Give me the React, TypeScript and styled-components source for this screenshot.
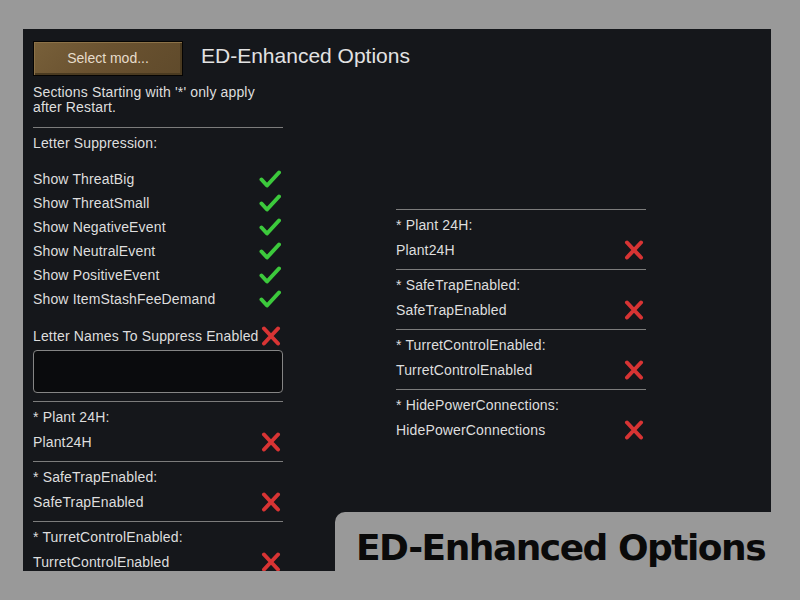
import { FC } from 'react';
import styled, { createGlobalStyle } from 'styled-components';

const GlobalStyle = createGlobalStyle`
    html, body {
        margin: 0;
        padding: 0;
        background: #999999;
    }
    body {
        font-family: 'Liberation Sans', Arial, sans-serif;
    }
`;

const Page = styled.div`
    position: relative;
    width: 800px;
    height: 600px;
    overflow: hidden;
    background: #999999;
    padding: 29px 29px 0 23px;
    box-sizing: border-box;
`;

const Window = styled.div`
    width: 748px;
    height: 542px;
    background: #15171b;
    padding: 12px 10px 0 10px;
    box-sizing: border-box;
    overflow: hidden;
    color: #dedede;
    font-size: 14px;
    letter-spacing: 0.15px;
`;

const Header = styled.div`
    display: flex;
    align-items: center;
    gap: 18px;
`;

const ModButton = styled.button`
    width: 150px;
    height: 35px;
    border: 1px solid #050403;
    background: linear-gradient(135deg, #78603a 0%, #6a5230 45%, #5f4a2b 100%);
    box-shadow: inset 1px 1px 0 #8c7248, inset -2px -2px 0 #4a3a20;
    color: #e6dccb;
    font-family: 'Liberation Sans', Arial, sans-serif;
    font-size: 14px;
    padding: 0 0 2px 0;
    cursor: pointer;
`;

const Title = styled.div`
    font-size: 21px;
    letter-spacing: 0;
    color: #e2e2e2;
    margin-top: -5px;
`;

const Columns = styled.div`
    display: flex;
    gap: 113px;
    align-items: flex-start;
`;

const Column = styled.div<{ $offset?: number }>`
    width: 250px;
    display: flex;
    flex-direction: column;
    margin-top: ${p => p.$offset ?? 0}px;
`;

const Note = styled.div`
    line-height: 15px;
    margin-top: 9px;
    margin-bottom: 12px;
`;

const Separator = styled.div`
    height: 1px;
    background: #7c7c7c;
`;

const Heading = styled.div`
    height: 24px;
    line-height: 24px;
    margin-top: 3px;
    margin-bottom: 12px;
`;

const Row = styled.div<{ $height?: number }>`
    display: flex;
    align-items: center;
    justify-content: space-between;
    height: ${p => p.$height ?? 24}px;
    white-space: nowrap;
`;

const Icon = styled.svg`
    flex: none;
    margin-right: 2px;
`;

const Spacer = styled.div<{ $h: number }>`
    height: ${p => p.$h}px;
`;

const TextField = styled.div`
    height: 43px;
    margin-top: 2px;
    margin-bottom: 8px;
    border: 1px solid #858585;
    border-radius: 4px;
    background: #0a0b0d;
    box-sizing: border-box;
`;

const Section = styled.div`
    display: flex;
    flex-direction: column;
    padding: 3px 0 7px 0;
`;

const Footer = styled.div`
    position: absolute;
    left: 335px;
    top: 512px;
    right: 0;
    bottom: 0;
    background: #999999;
    border-top-left-radius: 10px;
    padding: 14px 0 0 21px;
    box-sizing: border-box;
`;

const FooterText = styled.div`
    font-family: 'DejaVu Sans', Verdana, sans-serif;
    font-weight: bold;
    font-size: 36px;
    letter-spacing: -1.5px;
    color: #0a0a0a;
    line-height: 44px;
`;

const Check: FC = () => (
    <Icon width="22" height="20" viewBox="0 0 22 20">
        <path
            d="M2.5 10.5 L8 16.5 L20 3.5"
            fill="none"
            stroke="#3cc93c"
            strokeWidth="4"
            strokeLinecap="round"
            strokeLinejoin="round"
        />
    </Icon>
);

const Cross: FC = () => (
    <Icon width="20" height="20" viewBox="0 0 20 20">
        <path
            d="M3 2.5 L17 17.5 M17 2.5 L3 17.5"
            fill="none"
            stroke="#d83434"
            strokeWidth="4"
            strokeLinecap="round"
        />
    </Icon>
);

const suppression = [
    'Show ThreatBig',
    'Show ThreatSmall',
    'Show NegativeEvent',
    'Show NeutralEvent',
    'Show PositiveEvent',
    'Show ItemStashFeeDemand',
];

const toggles = [
    { label: '* Plant 24H:', name: 'Plant24H' },
    { label: '* SafeTrapEnabled:', name: 'SafeTrapEnabled' },
    { label: '* TurretControlEnabled:', name: 'TurretControlEnabled' },
    { label: '* HidePowerConnections:', name: 'HidePowerConnections' },
];

const ToggleSection: FC<{ label: string; name: string }> = ({ label, name }) => (
    <>
        <Separator />
        <Section>
            <Row>{label}</Row>
            <Row $height={25}>
                {name}
                <Cross />
            </Row>
        </Section>
    </>
);

export default function App() {
    return (
        <>
            <GlobalStyle />
            <Page>
                <Window>
                    <Header>
                        <ModButton>Select mod...</ModButton>
                        <Title>ED-Enhanced Options</Title>
                    </Header>
                    <Columns>
                        <Column>
                            <Note>
                                Sections Starting with '*' only apply
                                <br />
                                after Restart.
                            </Note>
                            <Separator />
                            <Heading>Letter Suppression:</Heading>
                            {suppression.map(s => (
                                <Row key={s}>
                                    {s}
                                    <Check />
                                </Row>
                            ))}
                            <Spacer $h={13} />
                            <Row>
                                Letter Names To Suppress Enabled
                                <Cross />
                            </Row>
                            <TextField />
                            {toggles.slice(0, 3).map(t => (
                                <ToggleSection key={t.name} label={t.label} name={t.name} />
                            ))}
                        </Column>
                        <Column $offset={133}>
                            {toggles.map(t => (
                                <ToggleSection key={t.name} label={t.label} name={t.name} />
                            ))}
                        </Column>
                    </Columns>
                </Window>
                <Footer>
                    <FooterText>ED-Enhanced Options</FooterText>
                </Footer>
            </Page>
        </>
    );
}
